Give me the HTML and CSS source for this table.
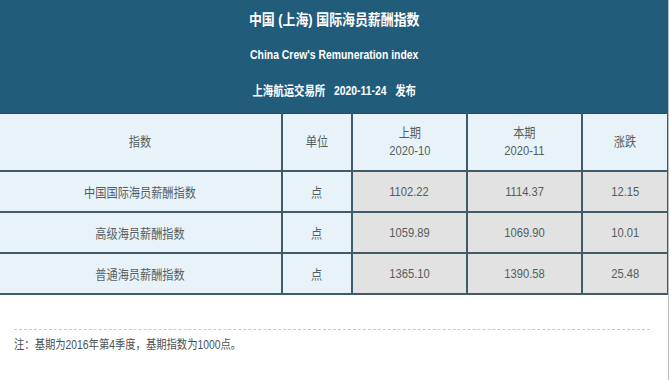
FILE: index.html
```html
<!DOCTYPE html>
<html lang="zh">
<head>
<meta charset="utf-8">
<link rel="stylesheet" href="styles.css">
</head>
<body>
<div class="page">
  <header class="banner">
    <div class="title"><span class="sq">中国 (上海) 国际海员薪酬指数</span></div>
    <div class="subtitle"><span class="sq narrow">China Crew's Remuneration index</span></div>
    <div class="pub"><span class="sq narrow">上海航运交易所&nbsp;&nbsp;&nbsp;2020-11-24&nbsp;&nbsp;&nbsp;发布</span></div>
  </header>
  <table class="grid">
    <colgroup>
      <col class="c-name"><col class="c-unit"><col class="c-num"><col class="c-num"><col class="c-chg">
    </colgroup>
    <thead>
      <tr>
        <th><span class="sq">指数</span></th>
        <th><span class="sq">单位</span></th>
        <th><span class="sq">上期<br>2020-10</span></th>
        <th><span class="sq">本期<br>2020-11</span></th>
        <th><span class="sq">涨跌</span></th>
      </tr>
    </thead>
    <tbody>
      <tr>
        <td class="lbl"><span class="sq">中国国际海员薪酬指数</span></td>
        <td class="lbl"><span class="sq">点</span></td>
        <td class="val"><span class="sq">1102.22</span></td>
        <td class="val"><span class="sq">1114.37</span></td>
        <td class="val"><span class="sq">12.15</span></td>
      </tr>
      <tr>
        <td class="lbl"><span class="sq">高级海员薪酬指数</span></td>
        <td class="lbl"><span class="sq">点</span></td>
        <td class="val"><span class="sq">1059.89</span></td>
        <td class="val"><span class="sq">1069.90</span></td>
        <td class="val"><span class="sq">10.01</span></td>
      </tr>
      <tr>
        <td class="lbl"><span class="sq">普通海员薪酬指数</span></td>
        <td class="lbl"><span class="sq">点</span></td>
        <td class="val"><span class="sq">1365.10</span></td>
        <td class="val"><span class="sq">1390.58</span></td>
        <td class="val"><span class="sq">25.48</span></td>
      </tr>
    </tbody>
  </table>
  <div class="notes">
    <div class="rule"></div>
    <p class="note"><span class="sq left">注：基期为2016年第4季度，基期指数为1000点。</span></p>
  </div>
</div>
</body>
</html>
```

FILE: styles.css
```css
html, body {
  margin: 0;
  padding: 0;
  background: #ffffff;
}
body {
  font-family: "Liberation Sans", "Noto Sans CJK SC", sans-serif;
  color: #555d61;
}
.page {
  width: 668px;
  height: 380px;
  border-right: 1px solid #b9bdbf;
  overflow: hidden;
}
.sq {
  display: inline-block;
  transform: scaleX(0.86);
  transform-origin: center;
}
.sq.narrow {
  transform: scaleX(0.8);
}
.sq.left {
  transform-origin: left center;
}
.banner {
  background: #215c7b;
  height: 113px;
  color: #ffffff;
  text-align: center;
  display: flex;
  flex-direction: column;
  box-sizing: border-box;
  padding-top: 9px;
}
.title {
  font-size: 15px;
  font-weight: bold;
  height: 22px;
  line-height: 22px;
}
.subtitle {
  font-size: 13px;
  font-weight: bold;
  height: 20px;
  line-height: 20px;
  margin-top: 14px;
}
.pub {
  font-size: 13px;
  font-weight: bold;
  height: 20px;
  line-height: 20px;
  margin-top: 16px;
}
.grid {
  width: 668px;
  border-collapse: collapse;
  table-layout: fixed;
  font-size: 13px;
}
.c-name { width: 282px; }
.c-unit { width: 70px; }
.c-num { width: 115px; }
.c-chg { width: 86px; }
.grid th, .grid td {
  border: 2px solid #405b69;
  text-align: center;
  padding: 0;
  font-weight: normal;
  color: #555d61;
}
.grid th:first-child, .grid td:first-child {
  border-left: none;
}
.grid thead th {
  background: #e7f3f9;
  height: 56px;
  line-height: 18px;
  border-top: 1px solid #2b4a5a;
}
.grid td {
  height: 39px;
}
.grid td.lbl {
  background: #e7f3f9;
}
.grid td.val {
  background: #e2e2e2;
}
.notes {
  padding: 34px 18px 0 14px;
}
.rule {
  border-top: 1px dashed #c9c9c9;
}
.note {
  margin: 6px 0 0;
  font-size: 12px;
  color: #4a5155;
  line-height: 18px;
}
```
